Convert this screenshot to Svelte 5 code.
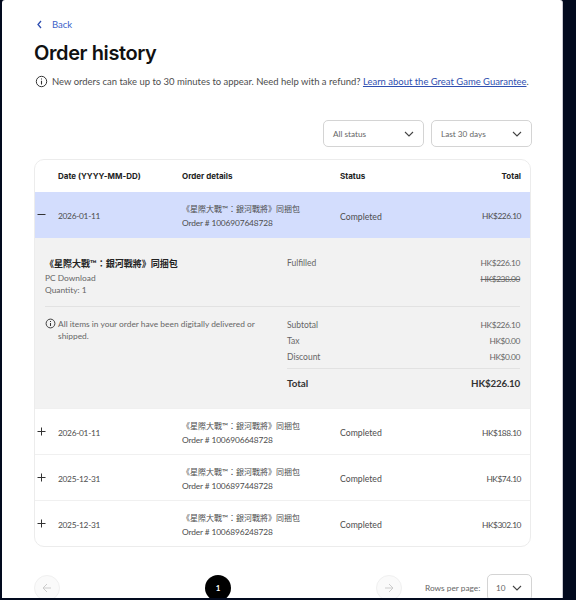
<script>
    const title = '《星際大戰™：銀河戰將》同捆包';

    const orders = [
        { date: '2026-01-11', id: '1006907648728', total: 'HK$226.10', open: true },
        { date: '2026-01-11', id: '1006906648728', total: 'HK$188.10', open: false },
        { date: '2025-12-31', id: '1006897448728', total: 'HK$74.10', open: false },
        { date: '2025-12-31', id: '1006896248728', total: 'HK$302.10', open: false }
    ];

    const summary = [
        ['Subtotal', 'HK$226.10'],
        ['Tax', 'HK$0.00'],
        ['Discount', 'HK$0.00']
    ];
</script>

<style>
    :global(body) {
        margin: 0;
        background: #020a1e;
        font-family: "Lato", "Noto Sans CJK TC", sans-serif;
    }

    .viewport {
        height: 600px;
        overflow: hidden;
        box-sizing: border-box;
        padding: 0 13px 2px 2px;
    }

    .page {
        height: 598px;
        overflow: hidden;
        box-sizing: border-box;
        background: #fff;
        border-right: 1px solid #c9c9d2;
        border-radius: 3px 3px 0 0;
        padding: 17px 30px 0 32px;
        font-size: 8.4px;
        color: #4d4d4d;
    }

    .back {
        display: flex;
        align-items: center;
        gap: 9px;
        height: 15px;
        padding-left: 2px;
        color: #3a5fc8;
        font-size: 9.5px;
    }

    h1 {
        margin: 8px 0 0;
        font-family: "Inter", sans-serif;
        font-size: 20px;
        letter-spacing: -0.4px;
        line-height: 26px;
        font-weight: 600;
        color: #111;
    }

    .notice {
        display: flex;
        align-items: center;
        gap: 4px;
        margin-top: 8px;
        height: 14px;
        font-size: 9.46px;
        padding-left: 1px;
        white-space: nowrap;
    }

    .notice svg {
        flex: none;
    }

    .notice a {
        color: #2f4fb0;
        text-decoration: underline;
    }

    .filters {
        display: flex;
        justify-content: flex-end;
        gap: 7px;
        margin-top: 32px;
    }

    .select {
        display: flex;
        align-items: center;
        justify-content: space-between;
        box-sizing: border-box;
        width: 101px;
        height: 27px;
        padding: 0 9px;
        border: 1px solid #d4d4d4;
        border-radius: 5px;
        color: #666;
        font-size: 8.2px;
    }

    .table {
        margin-top: 12px;
        margin-right: 1px;
        border: 1px solid #ececec;
        border-radius: 10px;
        overflow: hidden;
    }

    .row {
        display: grid;
        grid-template-columns: 23px 124px 158px 1fr 80px;
        align-items: center;
        padding-right: 9px;
    }

    .head {
        height: 32px;
        font-family: "Inter", sans-serif;
        font-size: 8px;
        font-weight: 700;
        color: #222;
    }

    .order {
        height: 43px;
        padding-top: 2px;
        border-top: 1px solid #f0f0f0;
    }

    .order.open {
        height: 44px;
        background: #d3ddfd;
        border-top: 0;
    }

    .toggle {
        display: flex;
        justify-content: center;
        padding-right: 10px;
        margin-top: -3px;
    }

    .date {
        letter-spacing: -0.3px;
    }

    .status {
        font-size: 8.7px;
    }

    .num {
        text-align: right;
        letter-spacing: -0.45px;
    }

    .head .num {
        letter-spacing: 0;
    }

    .details {
        line-height: 14px;
    }

    .cjk {
        font-size: 8px;
    }

    .ref {
        letter-spacing: -0.15px;
    }

    .panel {
        box-sizing: border-box;
        height: 170px;
        background: #f2f2f2;
        padding: 20px 10px 0;
    }

    .top, .bottom {
        display: grid;
        grid-template-columns: 242px 1fr;
    }

    .bottom {
        margin-top: 10px;
        border-top: 1px solid #e2e2e2;
        padding-top: 10px;
    }

    .name {
        font-size: 9px;
        font-weight: 700;
        color: #222;
        line-height: 11px;
    }

    .sub {
        margin-top: 4px;
        line-height: 11.5px;
        color: #666;
    }

    .costs {
        margin-top: -3px;
    }

    .pair {
        display: flex;
        justify-content: space-between;
        line-height: 16px;
        color: #666;
    }

    .pair .label {
        font-size: 8.5px;
    }

    .pair .price, .strike {
        letter-spacing: -0.4px;
    }

    .strike {
        text-align: right;
        text-decoration: line-through;
        color: #666;
        line-height: 16px;
    }

    .note {
        display: flex;
        gap: 2px;
        width: 215px;
        padding-top: 2px;
        line-height: 11.5px;
        color: #666;
    }

    .note svg {
        flex: none;
        margin-top: -1px;
    }

    .grand {
        margin-top: 2.5px;
        padding-top: 6px;
        border-top: 1px solid #e2e2e2;
        font-size: 9.8px;
        font-weight: 700;
        color: #333;
    }

    .pair.grand .price {
        letter-spacing: -0.2px;
    }

    .pager {
        display: flex;
        align-items: center;
        margin-top: 27px;
        height: 27px;
    }

    .arrow {
        display: flex;
        align-items: center;
        justify-content: center;
        box-sizing: border-box;
        width: 26px;
        height: 26px;
        border: 1px solid #f0f0f0;
        border-radius: 50%;
        background: #fafafa;
    }

    .current {
        display: flex;
        align-items: center;
        justify-content: center;
        width: 26px;
        height: 26px;
        margin-left: 145px;
        border-radius: 50%;
        background: #000;
        color: #fff;
        font-size: 8px;
        font-weight: 700;
    }

    .next {
        margin-left: 145px;
    }

    .rows {
        margin-left: 23px;
        color: #666;
        white-space: nowrap;
        font-size: 8.3px;
    }

    .small {
        width: 45px;
        height: 27px;
        margin-left: auto;
        padding-left: 8px;
    }
</style>

<div class="viewport">
    <div class="page">
        <div class="back">
            <svg width="7" height="9" viewBox="0 0 7 9"><path d="M5 1 L2 4.5 L5 8" fill="none" stroke="#2f4fb0" stroke-width="1.3"/></svg>
            Back
        </div>
        <h1>Order history</h1>
        <div class="notice">
            <svg width="13" height="13" viewBox="0 0 13 13"><circle cx="6.5" cy="6.5" r="5.2" fill="none" stroke="#333" stroke-width="1"/><path d="M6.5 5.8 V9.6 M6.5 3.4 V4.6" stroke="#333" stroke-width="1.1"/></svg>
            <span>New orders can take up to 30 minutes to appear. Need help with a refund? <a href="#top">Learn about the Great Game Guarantee</a>.</span>
        </div>

        <div class="filters">
            <div class="select">All status <svg width="10" height="6" viewBox="0 0 10 6"><path d="M1 1 L5 5 L9 1" fill="none" stroke="#444" stroke-width="1.1"/></svg></div>
            <div class="select">Last 30 days <svg width="10" height="6" viewBox="0 0 10 6"><path d="M1 1 L5 5 L9 1" fill="none" stroke="#444" stroke-width="1.1"/></svg></div>
        </div>

        <div class="table">
            <div class="row head">
                <span></span>
                <span>Date (YYYY-MM-DD)</span>
                <span>Order details</span>
                <span>Status</span>
                <span class="num">Total</span>
            </div>
            {#each orders as order}
                <div class="row order" class:open={order.open}>
                    <span class="toggle">
                        <svg width="9" height="9" viewBox="0 0 9 9">
                            <path d={order.open ? 'M0.5 4.5 H8.5' : 'M0.5 4.5 H8.5 M4.5 0.5 V8.5'} stroke="#333" stroke-width="1"/>
                        </svg>
                    </span>
                    <span class="date">{order.date}</span>
                    <span class="details"><span class="cjk">{title}</span><br /><span class="ref">Order # {order.id}</span></span>
                    <span class="status">Completed</span>
                    <span class="num">{order.total}</span>
                </div>
                {#if order.open}
                    <div class="panel">
                        <div class="top">
                            <div>
                                <div class="name">{title}</div>
                                <div class="sub">PC Download<br />Quantity: 1</div>
                            </div>
                            <div class="costs">
                                <div class="pair"><span class="label">Fulfilled</span><span class="price">HK$226.10</span></div>
                                <div class="strike">HK$238.00</div>
                            </div>
                        </div>
                        <div class="bottom">
                            <div class="note">
                                <svg width="11" height="11" viewBox="0 0 13 13"><circle cx="6.5" cy="6.5" r="5.2" fill="none" stroke="#333" stroke-width="1.1"/><path d="M6.5 5.8 V9.6 M6.5 3.4 V4.6" stroke="#333" stroke-width="1.2"/></svg>
                                <span>All items in your order have been digitally delivered or shipped.</span>
                            </div>
                            <div>
                                {#each summary as line}
                                    <div class="pair"><span class="label">{line[0]}</span><span class="price">{line[1]}</span></div>
                                {/each}
                                <div class="pair grand"><span>Total</span><span class="price">HK$226.10</span></div>
                            </div>
                        </div>
                    </div>
                {/if}
            {/each}
        </div>

        <div class="pager">
            <div class="arrow">
                <svg width="10" height="10" viewBox="0 0 10 10"><path d="M9 5 H1 M5 1 L1 5 L5 9" fill="none" stroke="#ccc" stroke-width="1"/></svg>
            </div>
            <div class="current">1</div>
            <div class="arrow next">
                <svg width="10" height="10" viewBox="0 0 10 10"><path d="M1 5 H9 M5 1 L9 5 L5 9" fill="none" stroke="#ccc" stroke-width="1"/></svg>
            </div>
            <span class="rows">Rows per page:</span>
            <div class="select small">10 <svg width="10" height="6" viewBox="0 0 10 6"><path d="M1 1 L5 5 L9 1" fill="none" stroke="#444" stroke-width="1.1"/></svg></div>
        </div>
    </div>
</div>
